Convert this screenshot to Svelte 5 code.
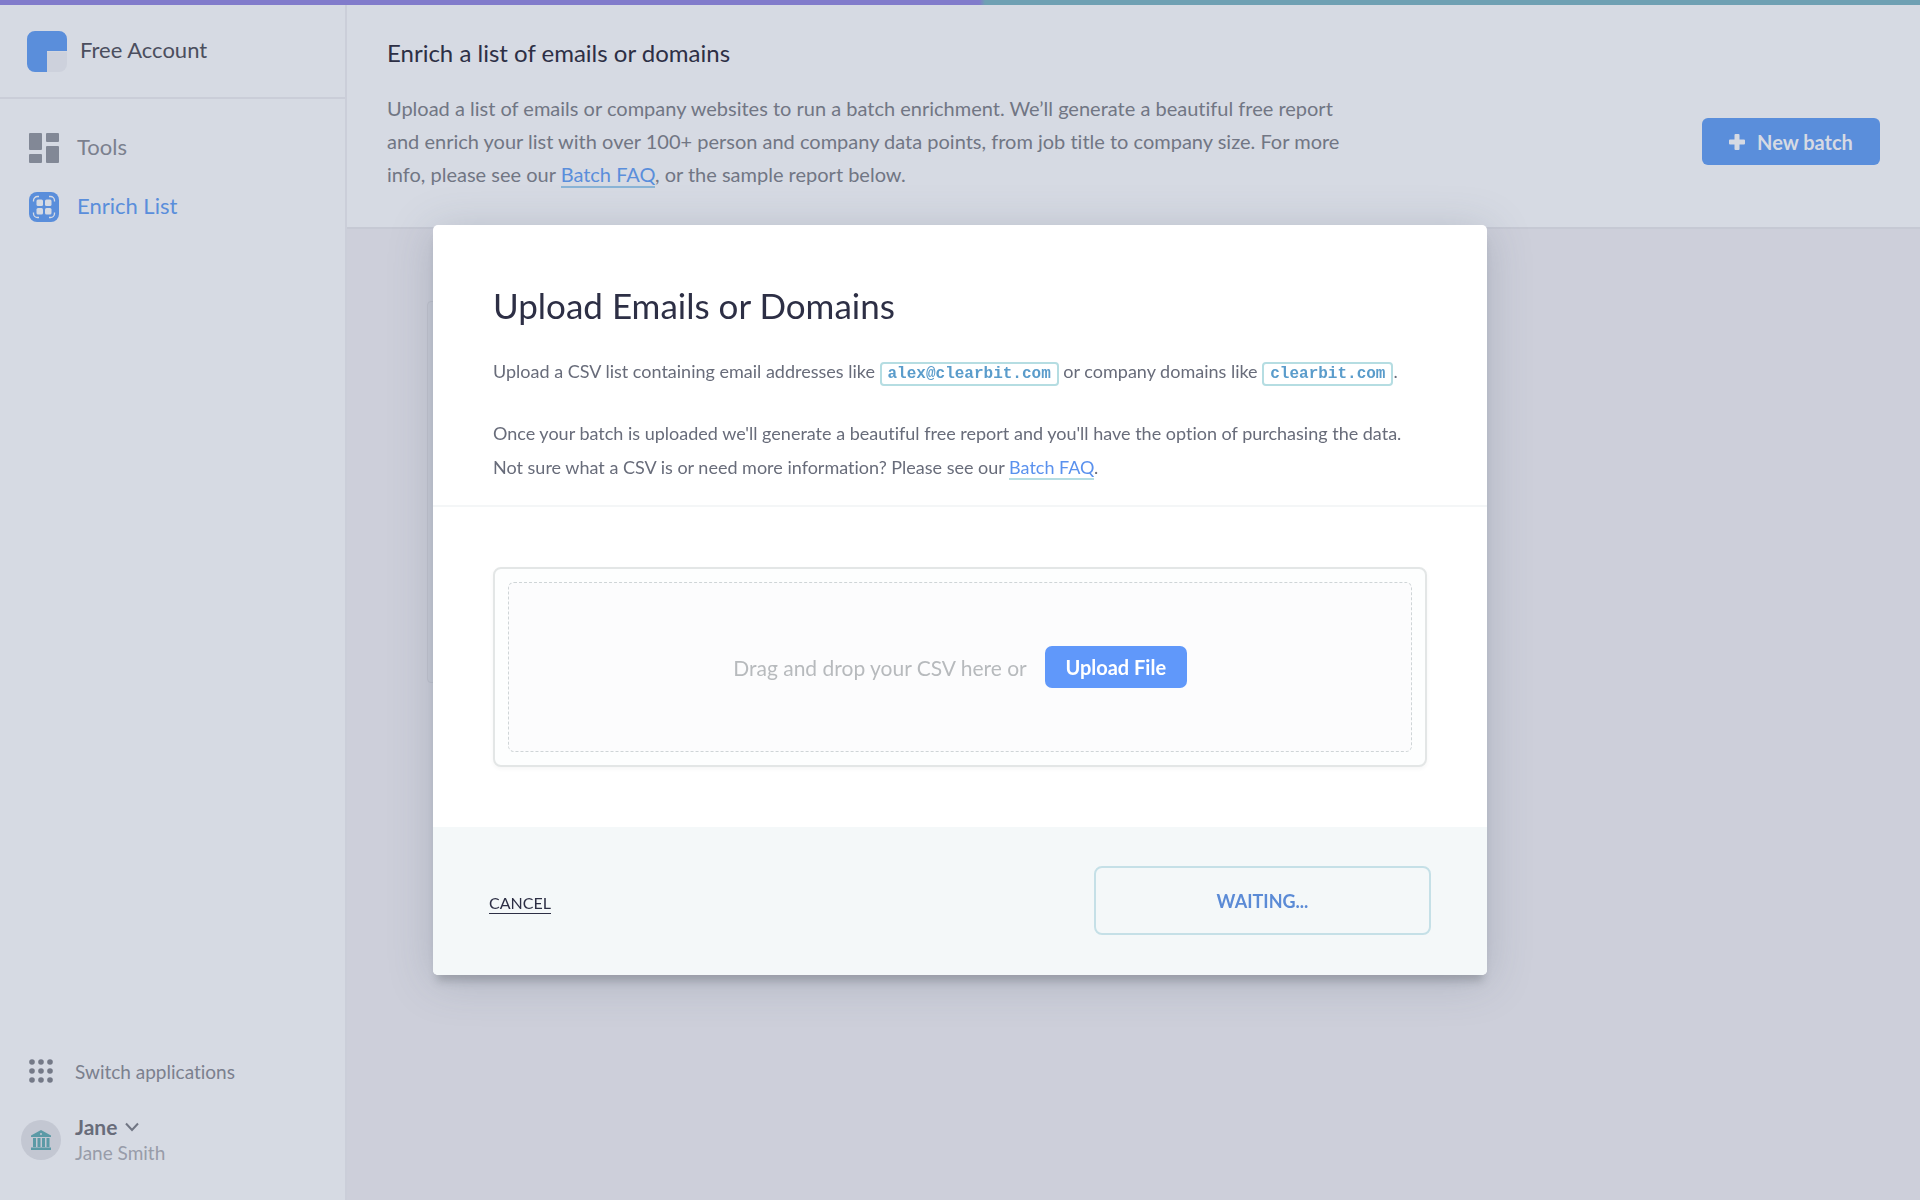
<script>
  let fileInput;
  const dots = [0, 1, 2].flatMap((row) => [0, 1, 2].map((col) => ({ x: 3 + col * 9, y: 3 + row * 9 })));
</script>

<div class="app">
  <div class="stripe"></div>
  <div class="shell">
    <aside class="sidebar">
      <div class="brand">
        <svg width="40" height="41" viewBox="0 0 40 41" aria-hidden="true">
          <path d="M20 20.500H40V33a8 8 0 0 1-8 8H20z" fill="#cdd1dc" />
          <path d="M8 0H32a8 8 0 0 1 8 8V20H20V41H8a8 8 0 0 1-8-8V8a8 8 0 0 1 8-8z" fill="#5a8edb" />
        </svg>
        <span>Free Account</span>
      </div>
      <nav class="nav">
        <a href="#tools">
          <svg width="30" height="30" viewBox="0 0 30 30" fill="#828896" aria-hidden="true">
            <rect width="13" height="17" rx="1" /><rect x="17" width="13" height="9" rx="1" />
            <rect y="21" width="13" height="9" rx="1" /><rect x="17" y="13" width="13" height="17" rx="1" />
          </svg>
          <span>Tools</span>
        </a>
        <a href="#enrich" class="active" aria-current="page">
          <svg width="30" height="30" viewBox="0 0 30 30" aria-hidden="true">
            <rect width="30" height="30" rx="8" fill="#5a8edb" />
            <g fill="#d6dae3">
              <rect x="7.500" y="7.500" width="6.500" height="6.500" rx="1.500" /><rect x="16" y="7.500" width="6.500" height="6.500" rx="1.500" />
              <rect x="7.500" y="16" width="6.500" height="6.500" rx="1.500" /><rect x="16" y="16" width="6.500" height="6.500" rx="1.500" />
            </g>
            <path d="M4.500 9.500V8.500a4 4 0 0 1 4-4h1.500M20 4.500h1.500a4 4 0 0 1 4 4v1M25.500 20.500v1a4 4 0 0 1-4 4H20M10 25.500H8.500a4 4 0 0 1-4-4v-1" fill="none" stroke="#d6dae3" stroke-width="1.300" />
          </svg>
          <span>Enrich List</span>
        </a>
      </nav>
      <div class="bottom">
        <button class="switch" type="button">
          <svg width="24" height="24" viewBox="0 0 24 24" fill="#747987" aria-hidden="true">
            {#each dots as d}<circle cx={d.x} cy={d.y} r="2.800" />{/each}
          </svg>
          <span>Switch applications</span>
        </button>
        <button class="user" type="button">
          <svg width="40" height="40" viewBox="0 0 40 40" aria-hidden="true">
            <circle cx="20" cy="20" r="20" fill="#c3c7d2" />
            <g fill="#5b9aa6">
              <path d="M10 15.500 20 10l10 5.500V17H10z" />
              <path d="M12 18h3v9h-3zM16.500 18h3v9h-3zM21 18h3v9h-3zM25.500 18h3v9h-3zM10 27.500h20V30H10z" />
            </g>
            <circle cx="20" cy="14" r="1" fill="#c3c7d2" />
          </svg>
          <span class="names">
            <span class="first">Jane
              <svg width="14" height="10" viewBox="0 0 14 10" aria-hidden="true"><path d="M1 1.500 7 8l6-6.500" fill="none" stroke="#717684" stroke-width="2" /></svg>
            </span>
            <span class="full">Jane Smith</span>
          </span>
        </button>
      </div>
    </aside>

    <main class="main">
      <header class="head">
        <h1>Enrich a list of emails or domains</h1>
        <div class="intro">
          <p>Upload a list of emails or company websites to run a batch enrichment. We’ll generate a beautiful free report<br />and enrich your list with over 100+ person and company data points, from job title to company size. For more<br />info, please see our <a href="#faq">Batch FAQ</a>, or the sample report below.</p>
          <button class="new" type="button">
            <svg width="16" height="16" viewBox="0 0 16 16" aria-hidden="true"><path d="M5.500 1a1 1 0 0 1 1-1h3a1 1 0 0 1 1 1v4.500H15a1 1 0 0 1 1 1v3a1 1 0 0 1-1 1h-4.500V15a1 1 0 0 1-1 1h-3a1 1 0 0 1-1-1v-4.500H1a1 1 0 0 1-1-1v-3a1 1 0 0 1 1-1h4.500z" fill="#d6dae3" /></svg>
            New batch
          </button>
        </div>
      </header>
      <div class="report"></div>
    </main>
  </div>
</div>

<div class="overlay">
  <div class="modal" role="dialog" aria-modal="true" aria-labelledby="upload-title">
    <section class="about">
      <h2 id="upload-title">Upload Emails or Domains</h2>
      <p>Upload a CSV list containing email addresses like <code>alex@clearbit.com</code> or company domains like <code>clearbit.com</code>.</p>
      <p>Once your batch is uploaded we'll generate a beautiful free report and you'll have the option of purchasing the data.<br />Not sure what a CSV is or need more information? Please see our <a href="#faq">Batch FAQ</a>.</p>
    </section>
    <section class="body">
      <div class="drop">
        <div class="zone">
          <span>Drag and drop your CSV here or</span>
          <button type="button" onclick={() => fileInput.click()}>Upload File</button>
          <input bind:this={fileInput} type="file" accept=".csv" hidden />
        </div>
      </div>
    </section>
    <footer class="foot">
      <button class="cancel" type="button">CANCEL</button>
      <button class="waiting" type="button">WAITING...</button>
    </footer>
  </div>
</div>

<style>
  :global(body) {
    background: #cdcfda;
    font-family: Lato, "Liberation Sans", sans-serif;
    font-variant-ligatures: none;
  }
  button {
    font: inherit;
    border: 0;
    padding: 0;
    background: none;
    cursor: pointer;
  }
  svg { display: block; flex: none; }
  h1, h2, p { margin: 0; font-weight: 400; }
  .app {
    min-height: 100vh;
    display: flex;
    flex-direction: column;
  }
  .stripe {
    height: 5px;
    background: linear-gradient(90deg, #817bcb 51%, #6fa0b3 51.300%);
  }
  .shell { flex: 1; display: flex; }
  .sidebar {
    width: 345px;
    flex: none;
    display: flex;
    flex-direction: column;
    background: #d6dae3;
    border-right: 2px solid #cbced9;
  }
  .brand {
    display: flex;
    align-items: center;
    gap: 13px;
    height: 92px;
    padding-left: 27px;
    border-bottom: 2px solid #cacdd8;
    font-size: 22px;
    color: #4b4e5e;
  }
  .brand span, .nav span { padding-bottom: 3px; }
  .nav {
    display: flex;
    flex-direction: column;
    gap: 29px;
    padding: 34px 29px;
  }
  .nav a {
    display: flex;
    align-items: center;
    gap: 18px;
    height: 30px;
    font-size: 22px;
    color: #7b808e;
    text-decoration: none;
  }
  .nav a.active { color: #5a8edb; }
  .bottom {
    margin-top: auto;
    display: flex;
    flex-direction: column;
    align-items: flex-start;
    gap: 31px;
    padding: 0 21px 34px;
    color: #7b808e;
  }
  .switch {
    display: flex;
    align-items: center;
    gap: 22px;
    padding-left: 8px;
    font-size: 19px;
    color: #7b808e;
  }
  .user {
    display: flex;
    align-items: center;
    gap: 14px;
    text-align: left;
    line-height: 26px;
  }
  .names { display: flex; flex-direction: column; }
  .first {
    display: flex;
    align-items: center;
    gap: 8px;
    font-size: 21px;
    font-weight: 700;
    color: #686c7a;
  }
  .full { font-size: 19px; color: #989ca9; }
  .main { flex: 1; min-width: 0; }
  .head {
    padding: 31px 40px 36px;
    background: #d6dae3;
    border-bottom: 2px solid #c6c9d4;
  }
  h1 { font-size: 24px; line-height: 34px; color: #2d2f45; margin-bottom: 22px; }
  .intro {
    display: flex;
    align-items: center;
    justify-content: space-between;
  }
  .intro p { font-size: 20px; line-height: 33px; color: #717684; }
  .intro a { color: #5a8edb; text-decoration: none; border-bottom: 2px solid #8ab4d6; }
  .new {
    display: flex;
    align-items: center;
    justify-content: center;
    gap: 12px;
    width: 178px;
    height: 47px;
    border-radius: 6px;
    background: #5a8edb;
    color: #d6dae3;
    font-size: 20px;
    font-weight: 700;
  }
  .report {
    height: 380px;
    margin: 72px 433px 0 80px;
    background: #cacdd8;
    border: 1px solid #c0c3ce;
    border-radius: 4px;
  }
  .overlay {
    position: fixed;
    inset: 0;
    display: flex;
    align-items: center;
    justify-content: center;
  }
  .modal {
    width: 1054px;
    max-width: 100%;
    background: #fff;
    border-radius: 5px;
    overflow: hidden;
    box-shadow: 0 10px 8px -4px rgba(70, 75, 80, 0.28), 0 6px 44px rgba(80, 90, 110, 0.25);
  }
  .about { padding: 59px 0 21px 60px; border-bottom: 2px solid #f4f6f7; }
  h2 { font-size: 35px; line-height: 42px; color: #2d2f45; margin-bottom: 28px; }
  .about p { font-size: 18px; line-height: 34px; color: #686c7a; white-space: nowrap; }
  .about p + p { margin-top: 28px; }
  .about a { color: #5a91ee; text-decoration: none; border-bottom: 2px solid #b5dde2; }
  code {
    font: 700 16px/20px "Liberation Mono", monospace;
    color: #5a9ccb;
    padding: 1px 6px;
    border: 2px solid #b5dde2;
    border-radius: 4px;
  }
  .body { padding: 60px; }
  .drop {
    padding: 13px;
    border: 2px solid #e3e6e6;
    border-radius: 8px;
    background: #fdfefe;
    box-shadow: 0 2px 4px rgba(0, 0, 0, 0.04);
  }
  .zone {
    display: flex;
    align-items: center;
    justify-content: center;
    gap: 18px;
    height: 168px;
    border: 1px dashed #cfd5d7;
    border-radius: 6px;
    background: #fcfcfd;
    font-size: 21px;
    color: #b7babd;
  }
  .zone button {
    width: 142px;
    height: 42px;
    border-radius: 7px;
    background: #6098fa;
    color: #fff;
    font-size: 20px;
    font-weight: 700;
  }
  .foot {
    display: flex;
    align-items: center;
    justify-content: space-between;
    padding: 39px 56px 40px;
    background: #f4f8f9;
  }
  .cancel {
    padding-top: 6px;
    font-size: 16px;
    line-height: 20px;
    color: #2d2f45;
    border-bottom: 1px solid #2d2f45;
  }
  .waiting {
    width: 337px;
    height: 69px;
    border: 2px solid #c5e0e7;
    border-radius: 8px;
    color: #5b8bd6;
    font-size: 18px;
    font-weight: 700;
  }
</style>
